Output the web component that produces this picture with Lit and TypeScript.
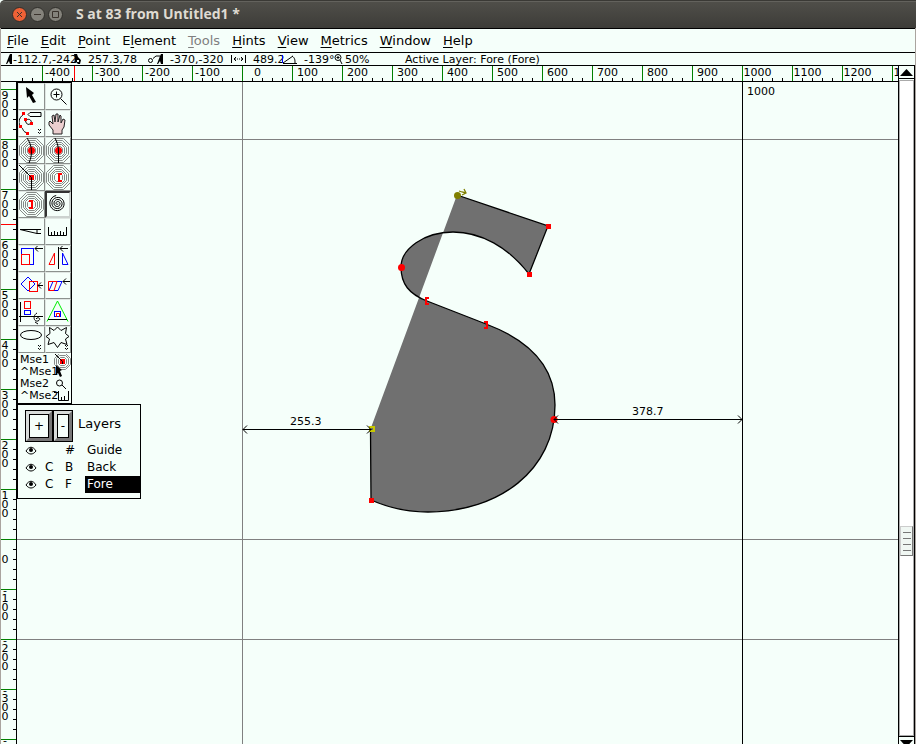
import { LitElement, html, svg, css } from "lit";
import { customElement } from "lit/decorators.js";
import { classMap } from "lit/directives/class-map.js";

const range = (from: number, to: number, step: number) => {
  const out: number[] = [];
  for (let v = from; step > 0 ? v <= to : v >= to; v += step) out.push(v);
  return out;
};

const octagon = (cx: number, cy: number, r: number) => {
  const k = Math.round(r * 0.42);
  return [
    [-k, -r], [k, -r], [r, -k], [r, k], [k, r], [-k, r], [-r, k], [-r, -k],
  ].map(([x, y]) => `${cx + x},${cy + y}`).join(" ");
};

const rings = (cx = 13.5, cy = 13.5, max = 12) => svg`<g class="ring">
  ${range(4, max, 2).map((r) => svg`<polygon points=${octagon(cx, cy, r)} />`)}
</g>`;

const chevrons = svg`<path class="ink" d="M20 19l1.500 1.500L23 19M20 22l1.500 1.500L23 22" />`;
const arrowLeft = (x: number, y: number, len: number) =>
  svg`<path class="ink" d="M${x + len} ${y}H${x}M${x + 3} ${y - 3}L${x} ${y}L${x + 3} ${y + 3}" />`;

const spiral = (() => {
  const pts: string[] = [];
  for (let a = 0; a < Math.PI * 7.5; a += 0.3) {
    const r = 0.4 + a * 0.33;
    pts.push(`${(12.5 + r * Math.cos(a)).toFixed(1)},${(12.5 + r * Math.sin(a)).toFixed(1)}`);
  }
  return pts.join(" ");
})();

interface Tool { name: string; icon: unknown; pressed?: boolean; }

const tools: Tool[] = [
  { name: "Pointer", icon: svg`<polygon points="8,4 16,10 14,12 18,19 15,20 11,13 9,15" />` },
  {
    name: "Magnify",
    icon: svg`<circle class="ink" cx="11.500" cy="11.500" r="5.500" /><path class="ink" d="M8.500 11.500h6M11.500 8.500v6M15.500 15.500l6 6" />`,
  },
  {
    name: "Freehand",
    icon: svg`<path class="ink" d="M12 2.500h11v4H12l-2-2zM6 4C0 8 0 14 3 17C6 19 4 22 10 23M8 10C12 8 14 11 13 13C10 16 8 14 7 9" />
      <path class="redfill" d="M4 2h3v3H4zM6 8h3v3H6zM12 12h3v3h-3zM1 15h3v3H1zM8 22h3v3H8z" />${chevrons}`,
  },
  {
    name: "Scroll by hand",
    icon: svg`<path class="hand" d="M8 24V20L4 15V12L5 11L8 14L7 6L9 5L10 12L11 4H13V12L15 5L16 6V13L18 9L20 10L19 17L17 20V24z" />`,
  },
  {
    name: "Curve point",
    icon: svg`${rings()}<circle class="redfill" cx="13.500" cy="13.500" r="3.500" /><path class="ink" d="M9 1C14 8 15 17 11 26" />`,
  },
  {
    name: "HVCurve point",
    icon: svg`${rings()}<circle class="redfill" cx="13.500" cy="13.500" r="3.500" /><path class="ink" d="M10 1C12 5 13 8 13.500 13V26" />`,
  },
  {
    name: "Corner point",
    icon: svg`${rings()}<path class="redfill" d="M11 11h5v5h-5z" /><path class="ink" d="M1 1L13.500 13.500V26" />`,
  },
  {
    name: "Tangent point",
    icon: svg`${rings()}<path class="redbar" d="M17 10h-3v7h3" />`,
  },
  {
    name: "Tangent after point",
    icon: svg`${rings()}<path class="redbar" d="M11 10h3v7h-3" />`,
  },
  { name: "Spiro", pressed: true, icon: svg`<polyline class="ink" points=${spiral} />` },
  {
    name: "Knife",
    icon: svg`<path class="ink" d="M2 11.500H23M2 11.500L19 15.500V11.500M19 15.500H23" />`,
  },
  {
    name: "Measure",
    icon: svg`<path class="ink" d="M3.500 9v8.500h18V9M6.500 17v-3M9.500 17v-4M12.500 17v-3M15.500 17v-4M18.500 17v-3" />`,
  },
  {
    name: "Scale",
    icon: svg`<rect class="blue" x="3.500" y="3.500" width="12" height="16" /><rect class="red" x="3.500" y="9.500" width="8" height="10" />${arrowLeft(17, 3.5, 8)}`,
  },
  {
    name: "Flip",
    icon: svg`<path class="red" d="M9.500 8L4 19.500H9.500z" /><path class="blue" d="M17.500 8L23 19.500H17.500z" /><path class="ink" d="M13.500 2V24" />${arrowLeft(15, 3.5, 8)}`,
  },
  {
    name: "Rotate",
    icon: svg`<path class="blue" d="M10 5L17 12L10 19L3 12z" /><rect class="red" x="11.500" y="9.500" width="8" height="10" />${arrowLeft(20, 13.5, 5)}`,
  },
  {
    name: "Skew",
    icon: svg`<path class="blue" d="M8 9.500H17L13 18.500H4z" /><path class="red" d="M3.500 9.500H12L9 18.500H3.500z" />${arrowLeft(18, 9.5, 8)}`,
  },
  {
    name: "Rotate in 3D",
    icon: svg`<rect class="red" x="6.500" y="2.500" width="6" height="7" /><rect class="blue" x="6.500" y="11.500" width="6" height="4" />
      <path class="ink" d="M2.500 3V23M1 17.500H25M19 14C15 16 15 23 20 22C24 20 20 17 18 20M17 23l3 2" />`,
  },
  {
    name: "Perspective",
    icon: svg`<path class="green" d="M12.500 2L2 22.500M12.500 2L23 22.500" /><path class="ink" d="M3 20.500H22" />
      <rect class="blue" x="9.500" y="12.500" width="6" height="5" /><path class="red" d="M11.500 18V14.500h3V18" />`,
  },
  { name: "Ellipse", icon: svg`<ellipse class="ink" cx="13" cy="9" rx="10.500" ry="4.500" />${chevrons}` },
  {
    name: "Star",
    icon: svg`<path class="ink" d="M4.500 1.500L9 4.500L12.500 1L16 4.500L21.500 1.500L20.500 7.500L24 10.500L20.500 13L22 18.500L16 16.500L12.500 21.500L9 16.500L3 18.500L4.500 13L1 10.500L5 7.500z" />${chevrons}`,
  },
];

const menus = [
  { before: "", key: "F", after: "ile" },
  { before: "", key: "E", after: "dit" },
  { before: "", key: "P", after: "oint" },
  { before: "E", key: "l", after: "ement" },
  { before: "", key: "T", after: "ools", disabled: true },
  { before: "", key: "H", after: "ints" },
  { before: "", key: "V", after: "iew" },
  { before: "", key: "M", after: "etrics" },
  { before: "", key: "W", after: "indow" },
  { before: "", key: "H", after: "elp" },
];

const pen = svg`<path d="M5 1h2v10h-2l-1-3-2 3H1l3-8z" />`;
const readouts = [
  { size: "slim", text: "-112.7,-242", icon: pen },
  { size: "mid", text: "257.3,78", icon: svg`<path d="M1 1h3l1 3 3 3-1 4H5L3 9 1 10l1-4z" /><path class="paper" d="M4 7h2v2H4z" />` },
  {
    size: "wide", text: "-370,-320",
    icon: svg`<circle class="ink" cx="2.500" cy="7.500" r="2" /><path class="ink" d="M5 5.500L8 3h4" /><path d="M13 1h2v10h-2l-1-3-2 3H9l3-8z" />`,
  },
  { size: "wide", text: "489.2", icon: svg`<path class="ink" d="M.5 2v8M14.500 2v8M3 6h2M6 6h1M8 6h1M10 6h2M5 4L3 6l2 2M10 4l2 2-2 2" />` },
  { size: "wide", text: "-139°", icon: svg`<path class="ink" d="M1 10.500h14M1 10L11 3M10 3c3 2 3 4 3 7" /><path class="blue" d="M.5 2v8" />` },
  { size: "zoom", text: "50%", icon: svg`<circle class="ink" cx="4" cy="4.500" r="3" /><path class="ink" d="M2.500 4.500h3M4 3v3M6 7l2 4" />` },
];

const layers = [
  { c: "", tag: "#", name: "Guide" },
  { c: "C", tag: "B", name: "Back" },
  { c: "C", tag: "F", name: "Fore", active: true },
];

@customElement("title-bar")
class TitleBar extends LitElement {
  static styles = css`
    :host {
      display: flex; align-items: center; box-sizing: border-box; height: 28px; padding: 0 10px 0 12px;
      background: linear-gradient(#504f4a, #3d3c38); border-top: 1px solid #3a3935;
      box-shadow: inset 0 1px #63625d; border-radius: 5px 0 0 0; color: #dfdbd2;
    }
    button { width: 15px; height: 15px; padding: 0; border: 0; background: none; margin-right: 3px; }
    svg { display: block; }
    h1 { font: bold 14px/20px "Open Sans", "Noto Sans", sans-serif; margin: 0 0 0 10px; padding-bottom: 1px; white-space: nowrap; }
    .close { fill: #ee6136; stroke: #2f2e2a; }
    .other { fill: #84827b; stroke: #2f2e2a; }
    .mark { fill: none; stroke: #3a322c; }
  `;
  render() {
    const knob = (name: string, kind: string, mark: unknown) => html`
      <button aria-label=${name}>
        <svg width="15" height="15"><circle class=${kind} cx="7.500" cy="7.500" r="7" />${mark}</svg>
      </button>`;
    return html`
      ${knob("Close", "close", svg`<path class="mark" d="M5 5l5 5M10 5l-5 5" />`)}
      ${knob("Minimise", "other", svg`<path class="mark" d="M4 7.500h7" />`)}
      ${knob("Maximise", "other", svg`<path class="mark" d="M4.500 4.500h6v6h-6z" />`)}
      <h1>S at 83 from Untitled1 *</h1>`;
  }
}

@customElement("tool-palette")
class ToolPalette extends LitElement {
  static styles = css`
    :host {
      display: block; box-sizing: border-box; width: 55px; background: #f5fffa;
      border: 1px solid #000; font: 11px/12px "DejaVu Sans", sans-serif; color: #000;
    }
    .tools { display: grid; grid-template-columns: 27px 26px; grid-auto-rows: 27px; }
    button {
      display: flex; align-items: flex-start; justify-content: flex-start;
      padding: 0; background: #f5fffa; overflow: hidden;
      border: 1px solid; border-color: #dfe6e2 #8c918e #8c918e #dfe6e2;
    }
    .pressed { border: 2px solid; border-color: #333 #ccd2cf #ccd2cf #333; }
    .tools svg { display: block; flex: none; width: 27px; height: 27px; margin: -1px; }
    .pressed svg { margin: -2px; }
    .bindings { display: grid; grid-template-columns: 1fr; padding: 1px 0 1px 2px; }
    .bindings dl, .bindings svg { grid-area: 1 / 1; }
    .bindings svg { justify-self: end; }
    dl, dd { margin: 0; }
    .ink { fill: none; stroke: #000; }
    .ring { fill: none; stroke: #858a87; }
    .redfill { fill: #f00; }
    .redbar { fill: none; stroke: #f00; stroke-width: 2; }
    .red { fill: none; stroke: #f00; }
    .blue { fill: none; stroke: #00f; }
    .green { fill: none; stroke: #0e0; }
    .hand { fill: #eccfcf; stroke: #222; }
  `;
  render() {
    return html`
      <div class="tools">
        ${tools.map((t) => html`
          <button class=${classMap({ pressed: !!t.pressed })} aria-label=${t.name}><svg viewBox="0 0 27 27">${t.icon}</svg></button>`)}
      </div>
      <div class="bindings">
        <dl><dd>Mse1</dd><dd>^Mse1</dd><dd>Mse2</dd><dd>^Mse2</dd></dl>
        <svg width="18" height="48">
          ${rings(9.5, 7.5, 8)}<path class="redfill" d="M7 5h5v5H7z" /><path class="ink" d="M2 0L9.500 7.500V10" />
          <path d="M3 11l6 5-2 1 2 5-2 1-2-4-2 2z" />
          <circle class="ink" cx="6.500" cy="29" r="3" /><path class="ink" d="M9 31l4 4" />
          <path class="ink" d="M1 38.500h4M5.500 37v9.500h10V37M8.500 46v-3M11.500 46v-4" />
        </svg>
      </div>`;
  }
}

@customElement("layer-panel")
class LayerPanel extends LitElement {
  static styles = css`
    :host {
      display: block; box-sizing: border-box; width: 124px; padding: 5px 0 5px 7px;
      background: #f5fffa; border: 1px solid #000; font: 12px/17px "DejaVu Sans", sans-serif; color: #000;
    }
    header { display: flex; align-items: flex-start; }
    header button {
      box-sizing: border-box; width: 28px; height: 32px; padding: 0; border: 4px solid;
      border-color: #d8dcda #777 #777 #d8dcda; outline: 1px solid #000; outline-offset: -1px;
      font: 12px "DejaVu Sans", sans-serif; background: #f5fffa; box-shadow: inset 0 0 0 1px #000; color: #000;
    }
    header .minus { width: 20px; }
    h2 { font: 13px/16px "DejaVu Sans", sans-serif; margin: 6px 0 0 5px; }
    ul { list-style: none; margin: 0; padding: 0; }
    li { display: grid; grid-template-columns: 20px 20px 20px 1fr; }
    .eye { padding: 0; border: 0; background: none; display: flex; align-items: center; }
    .ink { fill: none; stroke: #000; }
    .name { padding-left: 2px; }
    .active { background: #000; color: #fff; }
  `;
  render() {
    return html`
      <header><button aria-label="Add layer">+</button><button class="minus" aria-label="Remove layer">-</button><h2>Layers</h2></header>
      <ul>
        ${layers.map((l) => html`<li>
          <button class="eye" aria-label="Show ${l.name}"><svg width="12" height="9">
            <path class="ink" d="M1 5C4 0 8 0 11 5C8 9 4 9 1 5z" /><circle cx="6" cy="4" r="2" />
          </svg></button>
          <span>${l.c}</span><span>${l.tag}</span>
          <span class=${classMap({ name: true, active: !!l.active })}>${l.name}</span>
        </li>`)}
      </ul>`;
  }
}

@customElement("glyph-canvas")
class GlyphCanvas extends LitElement {
  static styles = css`
    :host { display: block; overflow: hidden; }
    svg { display: block; width: 100%; height: 100%; font: 11px "DejaVu Sans", sans-serif; }
    .guide { stroke: #808080; }
    .edge, .ink { stroke: #000; fill: none; }
    .outline { stroke: #000; stroke-width: 1.300; fill: none; }
    .fill { fill: #707070; fill-rule: evenodd; }
    .point { fill: #f00; }
    .tangent { stroke: #f00; stroke-width: 2; fill: none; }
    .first { fill: #808000; }
    .direction { stroke: #808000; fill: none; stroke-width: 1.300; }
    .chosen { fill: none; stroke: #c8c800; stroke-width: 2; }
  `;
  render() {
    const outline =
      "M440 113L531 144L512 192C491 165 464 150 436 150C407 150 384 167 384 185C384 202 392 212 410 219L469 242" +
      "C514 259 538 286 538 323C538 388 482 430 411 430C391 430 372 426 354 418L353.500 347";
    return html`<svg>
      <path class="fill" d="${outline}z" />
      <path class="guide" d="M225.500 0V2000M0 57.500H4000M0 457.500H4000M0 557.500H4000" />
      <path class="edge" d="M725.500 0V2000" />
      <path class="outline" d=${outline} />
      <circle class="first" cx="440.500" cy="113.500" r="3.500" />
      <path class="direction" d="M442 109l3 1 4 1M447 107l2 4-4 2" />
      <path class="point" d="M529 142h5v5h-5zM510 190h5v5h-5zM352 416h5v5h-5z" />
      <circle class="point" cx="384.500" cy="185.500" r="3.500" />
      <circle class="point" cx="537" cy="337.500" r="3.500" />
      <path class="tangent" d="M412 216h-3v6h3M467 240h3v6h-3" />
      <path class="chosen" d="M353 345h4v4h-4z" />
      <path class="ink" d="M226 347.500H354M230 343.500l-4 4 4 4M350 343.500l4 4-4 4M537 337.500H725M541 333.500l-4 4 4 4M721 333.500l4 4-4 4" />
      <text x="273" y="343">255.3</text>
      <text x="615" y="333">378.7</text>
      <text x="730" y="13">1000</text>
    </svg>`;
  }
}

@customElement("app-root")
class AppRoot extends LitElement {
  static styles = css`
    :host {
      display: flex; flex-direction: column; height: 100vh; overflow: hidden;
      background: #f5fffa; color: #000; font: 11px/12px "DejaVu Sans", sans-serif;
    }
    .window {
      flex: 1; min-height: 0; display: flex; flex-direction: column;
      border: solid #aaa49f; border-width: 0 1px;
    }
    nav {
      display: flex; gap: 12px; padding: 0 6px; height: 23px; align-items: center;
      border: solid #000; border-width: 1px 0; font-size: 13px;
    }
    nav button { padding: 0; border: 0; background: none; font: inherit; color: inherit; }
    nav button:disabled { color: #808080; }
    u { text-underline-offset: 2px; }
    .info {
      display: grid; grid-template-columns: 68px 75px 83px 51px 52px 71px 1fr; height: 12px;
      padding-left: 4px; border-bottom: 1px solid #000; white-space: nowrap; line-height: 14px;
    }
    .readout { display: flex; min-width: 0; }
    .readout svg { flex: none; height: 12px; overflow: visible; }
    .slim { width: 8px; }
    .mid { width: 15px; }
    .wide { width: 22px; }
    .zoom { width: 11px; }
    .ink { fill: none; stroke: #000; }
    .blue { fill: none; stroke: #00f; }
    .paper { fill: #f5fffa; }
    .editor {
      flex: 1; min-height: 0; display: grid;
      grid-template: 16px minmax(0, 1fr) / 16px minmax(0, 1fr) 17px;
    }
    .across {
      grid-area: 1 / 1 / 2 / 3; display: flex; overflow: hidden; border-bottom: 1px solid #000;
      padding-left: 16px; position: relative; line-height: 14px;
    }
    .unit {
      flex: none; box-sizing: border-box; width: 50px; border-left: 1px solid #008000;
      background: repeating-linear-gradient(90deg, transparent 0 9px, #000 9px 10px) 0 100% / 40px 3px no-repeat;
    }
    .across .lead {
      width: 25px; border: 0;
      background: repeating-linear-gradient(90deg, transparent 0 5px, #000 5px 6px, transparent 6px 10px) 0 100% / 25px 3px no-repeat;
    }
    .unit span { display: block; width: 29px; text-align: center; white-space: nowrap; }
    .cursor-x { position: absolute; left: 73px; top: 0; width: 1px; height: 15px; background: #f00; }
    .down {
      grid-area: 2 / 1; overflow: hidden; border-right: 1px solid #000; position: relative; line-height: 9px;
    }
    .down .lead { height: 7px; }
    .step {
      box-sizing: border-box; height: 50px; border-top: 1px solid #008000; padding-top: 1px;
      background: repeating-linear-gradient(180deg, transparent 0 9px, #000 9px 10px) 100% 0 / 3px 40px no-repeat;
    }
    .step span { display: block; width: 8px; text-align: center; }
    .step .minus { height: 0; line-height: 0; }
    .step .minus + span { margin-top: 3px; }
    .step .zero { padding-top: 14px; }
    .cursor-y { position: absolute; left: 0; top: 142px; height: 1px; width: 15px; background: #f00; }
    .stage { grid-area: 2 / 2; position: relative; overflow: hidden; }
    glyph-canvas { height: 100%; }
    .floating { position: absolute; left: 0; top: 0; }
    .scroll {
      grid-area: 1 / 3 / 3 / 4; display: flex; flex-direction: column;
      border: solid #000; border-width: 0 1px; min-height: 0;
    }
    .scroll button {
      padding: 0; border: 0; background: #f5fffa; height: 13px; flex: none; display: flex;
      justify-content: center; align-items: center; border-bottom: 1px solid #000;
    }
    .scroll .lower { height: 8px; border-bottom: 0; border-top: 1px solid #000; align-items: flex-start; padding-top: 3px; overflow: hidden; box-sizing: border-box; }
    .trough {
      flex: 1; display: flex; flex-direction: column; background: #fff; min-height: 0; margin-top: 1px;
      border: solid #aaa; border-width: 1px;
    }
    .above { flex: 446 1 0; }
    .below { flex: 179 1 0; }
    .thumb {
      height: 28px; background: #f0f7f3; border: 1px solid; border-color: #ccc #777 #777 #ccc;
      display: flex; flex-direction: column; align-items: center; justify-content: center; gap: 5px;
    }
    .thumb i { width: 8px; height: 1px; background: #777; }
  `;

  private vertical(v: number) {
    return html`<div class="step">
      ${v < 0 ? html`<span class="minus">-</span>` : ""}
      ${v === 0
        ? html`<span class="zero">0</span>`
        : [...String(Math.abs(v))].map((d) => html`<span>${d}</span>`)}
    </div>`;
  }

  render() {
    return html`
      <title-bar></title-bar>
      <div class="window">
        <nav>
          ${menus.map((m) => html`<button ?disabled=${!!m.disabled}>${m.before}<u>${m.key}</u>${m.after}</button>`)}
        </nav>
        <div class="info">
          ${readouts.map((r) => html`<div class="readout"><svg class=${r.size}>${r.icon}</svg><span>${r.text}</span></div>`)}
          <span>Active Layer: Fore (Fore)</span>
        </div>
        <div class="editor">
          <div class="across">
            <div class="unit lead"></div>
            ${range(-400, 2000, 100).map((v) => html`<div class="unit"><span>${v}</span></div>`)}
            <div class="cursor-x"></div>
          </div>
          <div class="down">
            <div class="lead"></div>
            ${range(900, -800, -100).map((v) => this.vertical(v))}
            <div class="cursor-y"></div>
          </div>
          <div class="stage">
            <glyph-canvas></glyph-canvas>
            <div class="floating">
              <tool-palette></tool-palette>
              <layer-panel></layer-panel>
            </div>
          </div>
          <div class="scroll">
            <button aria-label="Scroll up"><svg width="13" height="8"><path d="M6.500 1L13 8H0z" /></svg></button>
            <div class="trough">
              <div class="above"></div>
              <div class="thumb"><i></i><i></i><i></i><i></i></div>
              <div class="below"></div>
            </div>
            <button class="lower" aria-label="Scroll down"><svg width="13" height="8"><path d="M0 0H13L6.500 7z" /></svg></button>
          </div>
        </div>
      </div>`;
  }
}
